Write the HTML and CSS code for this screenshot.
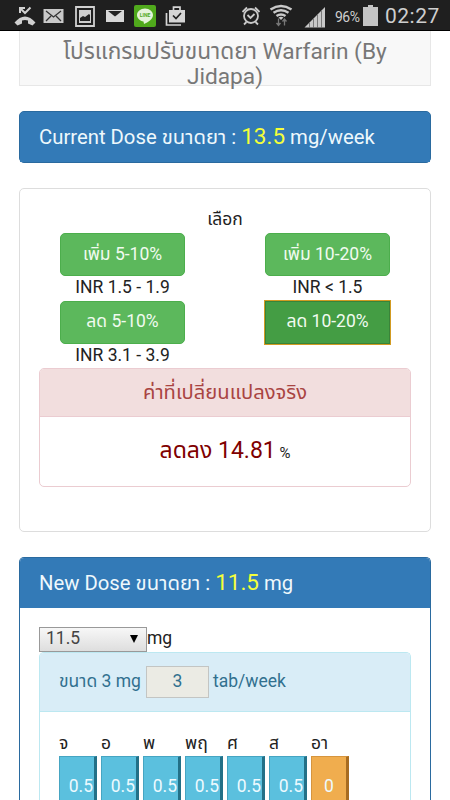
FILE: index.html
```html
<!DOCTYPE html>
<html lang="th">

<head>
    <meta charset="UTF-8">
    <meta name="viewport" content="width=device-width, initial-scale=1.0">
    <title>Warfarin</title>
    <link rel="stylesheet" href="styles.css">
</head>

<body>
    <div class="status-bar">
        <svg class="status-icons" width="190" height="31" viewBox="0 0 190 31">
            <!-- missed call -->
            <path d="M30.500 7.500l-5.500 5.500-4-4M20 13V8h5" fill="none" stroke="#d0d0d0" stroke-width="2"/>
            <path d="M14.500 22.500q10.500-12 21 0l-3 3-4.500-2v-3q-3-1-6 0v3l-4.500 2z" fill="#d0d0d0"/>
            <!-- mail -->
            <path d="M43.500 9h20v14h-20z" fill="#c9c9c9"/>
            <path d="M46 11l7.500 6 7.500-6M46 21l5-5M61 21l-5-5" fill="none" stroke="#333" stroke-width="1.300"/>
            <!-- gallery -->
            <path d="M76 7h18v19H76z" fill="none" stroke="#d0d0d0" stroke-width="1.800"/>
            <path d="M79 10h12v13H79z" fill="#cfcfcf"/>
            <path d="M80 21v-3l3-2 2 1 4-3 1 1v6z" fill="#222"/>
            <!-- mail -->
            <path d="M106 10h18v12h-18z" fill="#d8d8d8"/>
            <path d="M108 11h14l-7 5.500z" fill="#222"/>
            <!-- line -->
            <rect x="134" y="5" width="22" height="22" rx="2" fill="#50a91c"/>
            <path d="M145 8.500c-4.500 0-8 3-8 6.500 0 3.300 3 6 6.500 6.500l.5 2.500c4-1.500 9-5 9-9 0-3.500-3.500-6.500-8-6.500z" fill="#e5f3da"/>
            <text x="145" y="17.300" class="line-text">LINE</text>
            <!-- store -->
            <path d="M169 10h16v12.500h-16z" fill="#d5d5d5"/>
            <path d="M173.500 10V7.200h6.500V10M166.500 13v12h14.500" fill="none" stroke="#d5d5d5" stroke-width="1.700"/>
            <path d="M173 15.500l3 3 5-5.500" fill="none" stroke="#222" stroke-width="1.700"/>
        </svg>
        <svg class="status-icons" width="93" height="31" viewBox="240 0 93 31">
            <!-- alarm -->
            <g fill="none" stroke="#c9c9c9" stroke-width="1.800">
                <circle cx="251" cy="16" r="7"/>
                <path d="M247.500 15l3 3 4-4M242.500 12l4.500-4.500M259.500 12L255 7.500M246.500 22l-2.500 2.500M255.500 22l2.500 2.500"/>
            </g>
            <!-- wifi -->
            <g fill="none" stroke="#c9c9c9" stroke-width="2.500">
                <path d="M270.500 9.500q10.500-7 21 0M273.500 12.800q7.500-5 15 0M276.500 16q4.500-3 9 0"/>
            </g>
            <path d="M278.500 17.500q2.500-1.500 5 0l-2.500 2.500z" fill="#c9c9c9"/>
            <path d="M278.500 18.500v6.500M276.500 23l2 2.500 2-2.500M284.500 25.500V19M282.500 21.500l2-2.500 2 2.500" fill="none" stroke="#777" stroke-width="1.300"/>
            <!-- signal -->
            <path d="M304.500 27.500L325 7v20.500z" fill="#c9c9c9"/>
            <path d="M309.500 23v5M313.500 19v9M317.500 15v13M321.500 11v17" stroke="#666" stroke-width=".8"/>
        </svg>
        <span class="percent">96%</span>
        <svg class="battery" width="15" height="21" viewBox="0 0 15 21">
            <path d="M5 0h5v2h5v19H0V2h5z" fill="#c4c4c4"/>
        </svg>
        <span class="clock">02:27</span>
    </div>

    <div class="container">
        <div class="navbar">โปรแกรมปรับขนาดยา Warfarin (By Jidapa)</div>

        <div class="panel primary current">
            <div class="panel-heading">Current Dose ขนาดยา : <span class="dose">13.5</span> mg/week</div>
        </div>

        <div class="panel select-panel">
            <div class="choose">เลือก</div>
            <div class="choices">
                <div class="choice">
                    <button class="btn">เพิ่ม 5-10%</button>
                    <span>INR 1.5 - 1.9</span>
                </div>
                <div class="choice">
                    <button class="btn">เพิ่ม 10-20%</button>
                    <span>INR &lt; 1.5</span>
                </div>
                <div class="choice">
                    <button class="btn">ลด 5-10%</button>
                    <span>INR 3.1 - 3.9</span>
                </div>
                <div class="choice">
                    <button class="btn active">ลด 10-20%</button>
                </div>
            </div>
            <div class="panel danger">
                <div class="panel-heading">ค่าที่เปลี่ยนแปลงจริง</div>
                <div class="result"><span class="change">ลดลง 14.81</span> %</div>
            </div>
        </div>

        <div class="panel primary new-dose">
            <div class="panel-heading">New Dose ขนาดยา : <span class="dose">11.5</span> mg</div>
            <div class="panel-body">
                <div class="dose-row">
                    <div class="select"><span>11.5</span><span class="arrow"></span></div>
                    <span>mg</span>
                </div>
                <div class="panel info">
                    <div class="panel-heading">
                        <span class="size">ขนาด 3 mg</span>
                        <span class="tabs">3</span>
                        <span class="unit">tab/week</span>
                    </div>
                    <div class="days">
                        <div class="day">จ<span class="tab">0.5</span></div>
                        <div class="day">อ<span class="tab">0.5</span></div>
                        <div class="day">พ<span class="tab">0.5</span></div>
                        <div class="day">พฤ<span class="tab">0.5</span></div>
                        <div class="day">ศ<span class="tab">0.5</span></div>
                        <div class="day">ส<span class="tab">0.5</span></div>
                        <div class="day">อา<span class="tab none">0</span></div>
                    </div>
                </div>
            </div>
        </div>
    </div>
</body>

</html>
```

FILE: styles.css
```css
* {
    box-sizing: border-box;
}

body {
    margin: 0;
    background-color: #fff;
    font-family: Roboto, "Noto Sans Thai", "Noto Sans", sans-serif;
    font-size: 17.5px;
    color: #222;
}

.status-bar {
    display: flex;
    height: 31px;
    background-color: #1f1f1f;
    border-bottom: 1px solid #000;
    color: #cecece;
}

.status-icons {
    flex: none;
}

.status-icons + .status-icons {
    margin-left: 50px;
}

.line-text {
    font-size: 5px;
    font-weight: bold;
    text-anchor: middle;
    fill: #50a91c;
}

.percent {
    width: 30px;
    margin-left: 2px;
    font-size: 14px;
    line-height: 34px;
    letter-spacing: -0.5px;
    white-space: nowrap;
}

.battery {
    flex: none;
    margin-top: 5px;
    margin-left: -2px;
}

.clock {
    margin-left: 7px;
    font-size: 21px;
    line-height: 32px;
    letter-spacing: 0.5px;
}

.container {
    width: 412px;
    margin: 0 auto;
}

.navbar {
    height: 55px;
    padding: 8px 30px 0;
    background-color: #f8f8f8;
    border: 1px solid #e7e7e7;
    border-top: none;
    font-size: 22.7px;
    line-height: 25px;
    text-align: center;
    color: #777;
}

.panel {
    border: 1px solid #ddd;
    border-radius: 5px;
    background-color: #fff;
}

.primary {
    border-color: #2a6a9f;
}

.primary > .panel-heading {
    height: 50px;
    padding: 0 19px;
    background-color: #337ab7;
    border-radius: 4px 4px 0 0;
    font-size: 20.3px;
    line-height: 48px;
    white-space: nowrap;
    color: #eef8fc;
}

.dose {
    font-size: 22.5px;
    color: #f4ff3a;
}

.current {
    height: 52px;
    margin: 25px 0;
    background-color: #337ab7;
}

.select-panel {
    height: 344px;
    padding: 19px;
}

.choose {
    height: 25px;
    line-height: 23px;
    text-align: center;
}

.choices {
    display: grid;
    grid-template-columns: 125px 125px;
    grid-auto-rows: 67.5px;
    justify-content: space-between;
    padding: 0 21px;
}

.choice {
    display: flex;
    flex-direction: column;
    align-items: center;
    line-height: 22px;
}

.btn {
    width: 125px;
    height: 43px;
    padding: 0 0 1px;
    background-color: #5cb85c;
    border: 1px solid #4cae4c;
    border-radius: 5px;
    font-family: inherit;
    font-size: 17.5px;
    color: #f1fbf0;
}

.btn.active {
    background-color: #449d44;
    border-color: #398439;
    border-radius: 0;
    outline: 1px solid #d29b22;
}

.danger {
    height: 119px;
    border-color: #ebccd1;
    text-align: center;
}

.danger .panel-heading {
    height: 48px;
    background-color: #f2dede;
    border-bottom: 1px solid #ebccd1;
    border-radius: 4px 4px 0 0;
    font-size: 20.2px;
    line-height: 47px;
    color: #a94442;
}

.result {
    font-size: 15px;
    line-height: 68px;
}

.change {
    font-size: 23px;
    color: #800000;
}

.new-dose {
    height: 243px;
    margin-top: 25px;
    border-bottom: none;
    border-radius: 5px 5px 0 0;
}

.panel-body {
    padding: 19px 19px 0;
}

.dose-row {
    display: flex;
    height: 25px;
    line-height: 23px;
}

.select {
    display: flex;
    justify-content: space-between;
    align-items: center;
    width: 108px;
    height: 25px;
    padding: 0 8px 2px 6px;
    background: linear-gradient(#f7f7f7, #dedede);
    border: 1px solid #999;
    color: #444;
}

.arrow {
    border: 4px solid transparent;
    border-top: 8px solid #000;
    border-bottom: none;
}

.info {
    height: 148px;
    border-color: #bce8f1;
    border-bottom: none;
    border-radius: 5px 5px 0 0;
}

.info .panel-heading {
    display: flex;
    height: 59px;
    padding: 13px 19px;
    background-color: #d9edf7;
    border-bottom: 1px solid #bce8f1;
    border-radius: 4px 4px 0 0;
    line-height: 30px;
    color: #31708f;
}

.size {
    width: 87px;
    white-space: nowrap;
}

.tabs {
    width: 63px;
    height: 32px;
    margin-right: 4px;
    background-color: #ebebe4;
    border: 1px solid #c3c5c3;
    line-height: 29px;
    text-align: center;
}

.days {
    display: flex;
    gap: 4px;
    padding: 19px 19px 0;
}

.day {
    width: 38px;
    line-height: 24px;
}

.tab {
    display: block;
    height: 44px;
    margin-top: 1px;
    padding-right: 1px;
    background-color: #5bc0de;
    border: 1px solid #46a5c2;
    border-right: 3px solid #237087;
    border-bottom: none;
    line-height: 58px;
    text-align: right;
    color: #edfaff;
}

.tab.none {
    padding: 0;
    background-color: #f0ad4e;
    border-color: #d6953e;
    border-right-color: #a86c20;
    text-align: center;
}
```
